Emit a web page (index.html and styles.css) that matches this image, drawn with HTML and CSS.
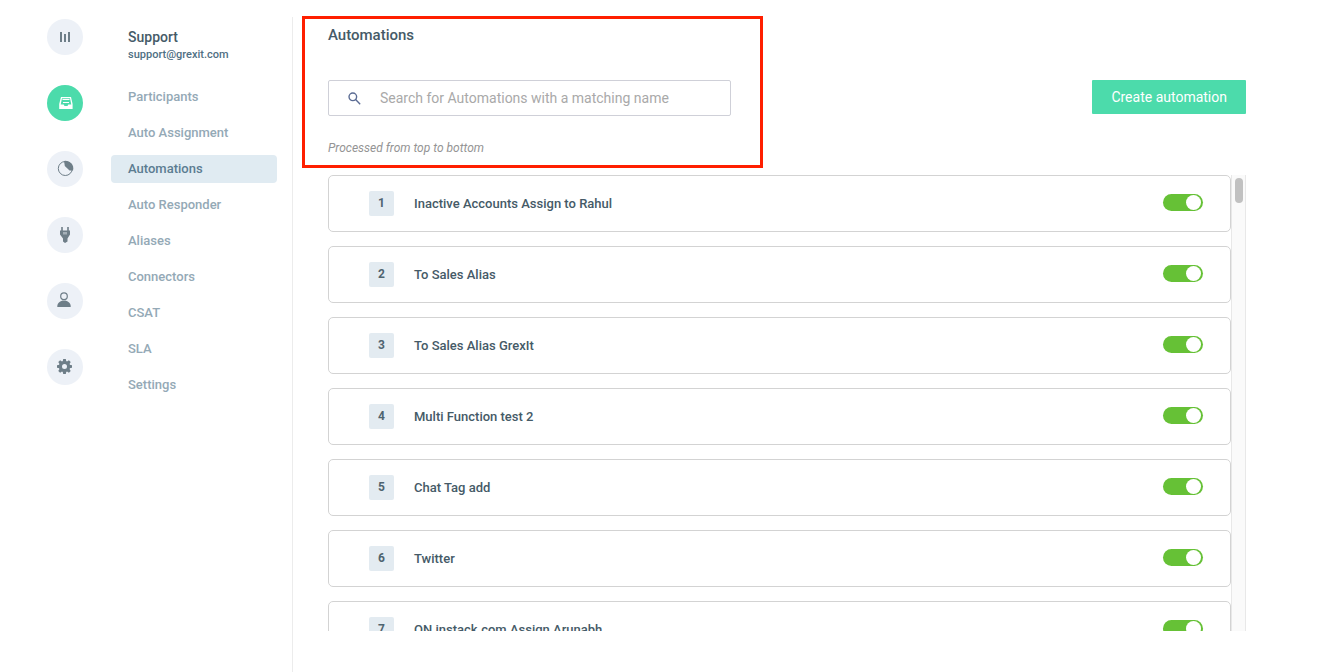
FILE: index.html
```html
<!DOCTYPE html>
<html lang="en">
<head>
<meta charset="utf-8">
<meta name="viewport" content="width=device-width, initial-scale=1">
<title>Automations</title>
<link rel="stylesheet" href="styles.css">
</head>
<body class="app">
<nav class="rail" aria-label="Sections">
  <button class="rail-button" type="button" aria-label="Dashboard">
    <svg class="icon" viewBox="0 0 36 36"><path d="M13 13h2v10h-2zM17 15h2v8h-2zM21 13h2v10h-2z"/></svg>
  </button>
  <button class="rail-button rail-button-active" type="button" aria-label="Shared inboxes">
    <svg class="icon" viewBox="0 0 36 36"><path fill-rule="evenodd" d="M14 12h10l1.600 7v5H12.200v-5zM15 13.200L13.700 19.500h3l.8 1.500h3l.8-1.500h3L23 13.200z"/><path d="M15.500 14h7v1h-7zM16 17h6v1h-6z"/></svg>
  </button>
  <button class="rail-button" type="button" aria-label="Analytics">
    <svg class="icon" viewBox="0 0 36 36"><circle cx="18.300" cy="17.500" r="7" fill="none" stroke="currentColor" stroke-width="1"/><path d="M17 10a7.600 7.600 0 0 1 9 9.500h-3.500L17.800 15z"/></svg>
  </button>
  <button class="rail-button" type="button" aria-label="Integrations">
    <svg class="icon" viewBox="0 0 36 36"><path d="M14.200 10h1.600v3.500h4.400V10h1.600v3.500H23v4l-2.500 4V24.500L18 26l-2-1.500V21.500l-3-4v-4h1.200z"/><path class="plug-slot" d="M16 15h4v2.500h-4z"/></svg>
  </button>
  <button class="rail-button" type="button" aria-label="Users">
    <svg class="icon" viewBox="0 0 36 36"><circle cx="17" cy="13.200" r="3.300" fill="none" stroke="currentColor" stroke-width="1.200"/><path d="M10.300 24v-1c0-3 3-5.500 6.700-5.500s6.700 2.500 6.700 5.500v1z"/></svg>
  </button>
  <button class="rail-button" type="button" aria-label="Preferences">
    <svg class="icon" viewBox="0 0 36 36"><g transform="translate(17.500 17.500)"><circle r="4.100" fill="none" stroke="currentColor" stroke-width="3.200"/><path id="tooth" d="M-1.800-5l.5-2.500h2.600l.5 2.500z"/><use href="#tooth" transform="rotate(45)"/><use href="#tooth" transform="rotate(90)"/><use href="#tooth" transform="rotate(135)"/><use href="#tooth" transform="rotate(180)"/><use href="#tooth" transform="rotate(225)"/><use href="#tooth" transform="rotate(270)"/><use href="#tooth" transform="rotate(315)"/></g></svg>
  </button>
</nav>

<aside class="sidebar">
  <header class="inbox">
    <h2 class="inbox-name">Support</h2>
    <p class="inbox-address">support@grexit.com</p>
  </header>
  <nav class="menu" aria-label="Support">
    <a class="menu-link" href="#participants">Participants</a>
    <a class="menu-link" href="#auto-assignment">Auto Assignment</a>
    <a class="menu-link menu-link-active" href="#automations" aria-current="page">Automations</a>
    <a class="menu-link" href="#auto-responder">Auto Responder</a>
    <a class="menu-link" href="#aliases">Aliases</a>
    <a class="menu-link" href="#connectors">Connectors</a>
    <a class="menu-link" href="#csat">CSAT</a>
    <a class="menu-link" href="#sla">SLA</a>
    <a class="menu-link" href="#settings">Settings</a>
  </nav>
</aside>

<main class="content">
  <div class="highlight" aria-hidden="true"></div>
  <h1 class="title">Automations</h1>
  <div class="toolbar">
    <label class="search">
      <svg class="search-icon" viewBox="0 0 14 14"><circle cx="5.200" cy="5.200" r="4.100"/><path d="M8.200 8.200l4.900 4.900"/></svg>
      <input class="search-input" type="search" aria-label="Search automations" placeholder="Search for Automations with a matching name">
    </label>
    <button class="create" type="button">Create automation</button>
  </div>
  <p class="note">Processed from top to bottom</p>
  <div class="scroller">
    <ol class="list">
      <li class="card"><span class="order">1</span><label class="name" for="a1">Inactive Accounts Assign to Rahul</label><input class="switch" id="a1" type="checkbox" role="switch" checked></li>
      <li class="card"><span class="order">2</span><label class="name" for="a2">To Sales Alias</label><input class="switch" id="a2" type="checkbox" role="switch" checked></li>
      <li class="card"><span class="order">3</span><label class="name" for="a3">To Sales Alias GrexIt</label><input class="switch" id="a3" type="checkbox" role="switch" checked></li>
      <li class="card"><span class="order">4</span><label class="name" for="a4">Multi Function test 2</label><input class="switch" id="a4" type="checkbox" role="switch" checked></li>
      <li class="card"><span class="order">5</span><label class="name" for="a5">Chat Tag add</label><input class="switch" id="a5" type="checkbox" role="switch" checked></li>
      <li class="card"><span class="order">6</span><label class="name" for="a6">Twitter</label><input class="switch" id="a6" type="checkbox" role="switch" checked></li>
      <li class="card"><span class="order">7</span><label class="name" for="a7">ON instack.com Assign Arunabh</label><input class="switch" id="a7" type="checkbox" role="switch" checked></li>
    </ol>
    <div class="track" aria-hidden="true"><div class="thumb"></div></div>
  </div>
</main>
</body>
</html>
```

FILE: styles.css
```css
* {
  box-sizing: border-box;
}

.app {
  display: flex;
  height: 100vh;
  margin: 0;
  overflow: hidden;
  background: #fff;
  color: #455a67;
  font-family: Roboto, "Liberation Sans", sans-serif;
  font-size: 13px;
  line-height: 20px;
}

.rail {
  display: flex;
  flex: none;
  flex-direction: column;
  gap: 30px;
  padding: 19px 28px 0 47px;
}

.rail-button {
  width: 36px;
  height: 36px;
  padding: 0;
  border: 0;
  border-radius: 50%;
  background: #edf1f7;
  color: #6e7e88;
}

.rail-button-active {
  background: #4cdbab;
  color: #fff;
}

.icon {
  display: block;
  fill: currentColor;
}

.plug-slot {
  fill: #a5b0b8;
}

.sidebar {
  flex: none;
  width: 181px;
  padding: 27px 15px 0 0;
}

.inbox {
  padding-left: 17px;
}

.inbox-name {
  margin: 0;
  font-size: 14px;
  font-weight: 500;
}

.inbox-address {
  margin: 0;
  color: #4f6f83;
  font-size: 11px;
  font-weight: 500;
  line-height: 16px;
}

.menu {
  display: flex;
  flex-direction: column;
  gap: 8px;
  padding-top: 20px;
}

.menu-link {
  padding: 4px 17px;
  border-radius: 4px;
  color: #94a9b6;
  font-weight: 500;
  text-decoration: none;
}

.menu-link-active {
  background: #e0ebf2;
  color: #5b7c91;
}

.content {
  position: relative;
  display: flex;
  flex: 1;
  flex-direction: column;
  min-width: 0;
  margin-top: 17px;
  padding: 8px 89px 41px 35px;
  border-left: 1px solid #ececec;
}

.highlight {
  position: absolute;
  top: -1px;
  left: 9px;
  width: 461px;
  height: 152px;
  border: 3px solid #ff1f00;
  pointer-events: none;
}

.title {
  margin: 0 0 35px;
  font-size: 15px;
  font-weight: 500;
}

.toolbar {
  display: flex;
  align-items: flex-start;
  justify-content: space-between;
}

.search {
  display: flex;
  align-items: center;
  gap: 19px;
  width: 403px;
  height: 36px;
  padding: 0 19px;
  border: 1px solid #cfd0d8;
  border-radius: 2px;
}

.search-icon {
  flex: none;
  width: 13px;
  fill: none;
  stroke: #5a6b93;
  stroke-width: 1.5;
}

.search-input {
  flex: 1;
  min-width: 0;
  padding: 0;
  border: 0;
  outline: 0;
  background: none;
  color: #455a67;
  font: inherit;
  font-size: 14px;
}

.search-input::placeholder {
  color: #a9a9a9;
}

.create {
  height: 34px;
  padding: 0 19px;
  border: 0;
  border-radius: 1px;
  background: #4cdbab;
  color: #fff;
  font: inherit;
  font-size: 14px;
}

.note {
  margin: 22px 0 17px;
  color: #949494;
  font-size: 12px;
  font-style: italic;
}

.scroller {
  display: flex;
  flex: 1;
  min-height: 0;
}

.list {
  display: flex;
  flex: 1;
  flex-direction: column;
  gap: 14px;
  min-width: 0;
  margin: 0;
  padding: 0;
  overflow-y: auto;
  list-style: none;
  scrollbar-width: none;
}

.card {
  display: flex;
  flex: none;
  align-items: center;
  height: 57px;
  padding: 0 27px 0 40px;
  border: 1px solid #d3d3d3;
  border-radius: 5px;
}

.order {
  width: 25px;
  border-radius: 2px;
  background: #e3ebf1;
  color: #4f6470;
  font-size: 12px;
  font-weight: 700;
  line-height: 25px;
  text-align: center;
}

.name {
  flex: 1;
  padding-left: 20px;
  font-weight: 500;
}

.switch {
  display: flex;
  align-items: center;
  justify-content: flex-end;
  width: 40px;
  height: 17px;
  margin: 0 0 2px;
  padding: 0 2px;
  border-radius: 9px;
  background: #b5bdc2;
  appearance: none;
}

.switch::before {
  width: 15px;
  height: 15px;
  border-radius: 50%;
  background: #fff;
  content: "";
}

.switch:checked {
  background: #66c136;
}

.switch:not(:checked) {
  justify-content: flex-start;
}

.track {
  flex: none;
  width: 15px;
  padding: 3px;
  border: 1px solid #e8e8e8;
  border-width: 0 1px;
  background: #fafafa;
}

.thumb {
  width: 8px;
  height: 25px;
  border-radius: 4px;
  background: #c1c1c1;
}
```
